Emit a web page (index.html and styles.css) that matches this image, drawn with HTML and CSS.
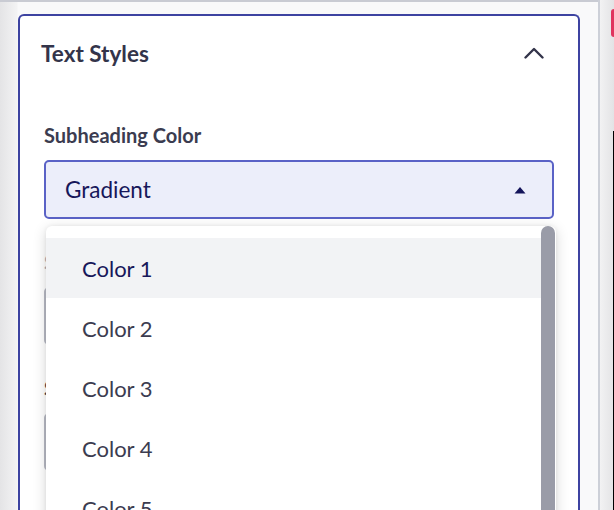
FILE: index.html
```html
<!DOCTYPE html>
<html>
<head>
<meta charset="utf-8">
<link rel="stylesheet" href="styles.css">
</head>
<body>
<div class="page">
  <div class="main">
    <div class="card">
      <div class="card-header">
        <span class="card-title">Text Styles</span>
        <svg class="chevron" width="20" height="12" viewBox="0 0 20 12"><polyline points="1.5,10.5 10,2 18.5,10.5" fill="none" stroke="#33344a" stroke-width="2.4" stroke-linecap="round" stroke-linejoin="round"/></svg>
      </div>
      <div class="card-body">
        <div class="field">
          <label class="field-label">Subheading Color</label>
          <div class="select-wrap">
            <div class="select">
              <span class="select-value">Gradient</span>
              <svg class="caret" width="12" height="8" viewBox="0 0 12 8"><polygon points="0.5,7.5 6,1 11.5,7.5" fill="#14145a"/></svg>
            </div>
            <div class="menu">
              <div class="menu-list">
                <div class="menu-item active">Color 1</div>
                <div class="menu-item">Color 2</div>
                <div class="menu-item">Color 3</div>
                <div class="menu-item">Color 4</div>
                <div class="menu-item">Color 5</div>
                <div class="menu-item">Color 6</div>
              </div>
              <div class="scrollbar"></div>
            </div>
          </div>
        </div>
        <div class="field">
          <label class="field-label muted">Subheading Size</label>
          <div class="input"></div>
        </div>
        <div class="field">
          <label class="field-label">Subheading Font</label>
          <div class="input"></div>
        </div>
      </div>
    </div>
  </div>
  <div class="divider"></div>
  <div class="side">
    <div class="side-badge"></div>
    <div class="side-edge"></div>
  </div>
</div>
</body>
</html>
```

FILE: styles.css
```css
* { box-sizing: border-box; }
html, body { margin: 0; padding: 0; }
body {
  width: 614px;
  height: 510px;
  overflow: hidden;
  font-family: "Lato", "Liberation Sans", sans-serif;
}
.page {
  display: flex;
  height: 510px;
  overflow: hidden;
}
.main {
  width: 598px;
  flex: none;
  border-top: 2px solid #c9cbd3;
  padding: 12px 18px 0 18px;
  background: linear-gradient(to right, #e4e4e6 0px, #f3f3f4 17px, #f9f9fa 18px, #f9f9fa 100%);
}
.card {
  width: 562px;
  height: 520px;
  border: 2px solid #3d43a1;
  border-bottom: none;
  border-radius: 6px 6px 0 0;
  background: #ffffff;
}
.card-header {
  display: flex;
  align-items: center;
  justify-content: space-between;
  padding: 0 34px 0 21px;
  height: 76px;
}
.card-title {
  font-size: 22.5px;
  font-weight: 700;
  color: #33344a;
  line-height: 28px;
}
.chevron { display: block; margin-top: -3px; }
.card-body {
  padding: 31px 24px 0 24px;
  display: flex;
  flex-direction: column;
  gap: 31px;
}
.field {
  display: flex;
  flex-direction: column;
  gap: 13px;
}
.field-label {
  font-size: 20px;
  font-weight: 700;
  color: #3b3c50;
  line-height: 24px;
}
.field-label.muted { color: #a9abb6; }
.select-wrap { position: relative; }
.select {
  height: 59px;
  width: 510px;
  border: 2px solid #5a62c6;
  border-radius: 5px;
  background: #eceefa;
  display: flex;
  align-items: center;
  justify-content: space-between;
  padding: 0 26px 0 19px;
}
.select-value {
  font-size: 22.5px;
  color: #17175a;
  line-height: 28px;
}
.caret { display: block; }
.input {
  height: 58px;
  width: 510px;
  border: 2px solid #b8bac4;
  border-radius: 5px;
  background: #fff;
}
.menu {
  position: absolute;
  top: 66px;
  left: 2px;
  width: 510px;
  height: 320px;
  background: #ffffff;
  border-radius: 6px 6px 0 0;
  box-shadow: 0 3px 14px rgba(0, 0, 0, 0.16), 0 0 4px rgba(0, 0, 0, 0.06);
  display: flex;
  overflow: hidden;
}
.menu-list {
  flex: 1;
  padding-top: 12px;
}
.menu-item {
  height: 60px;
  display: flex;
  align-items: center;
  padding-left: 36px;
  font-size: 22px;
  color: #3b3c50;
}
.menu-item.active {
  background: #f2f3f5;
  color: #17175a;
}
.scrollbar {
  width: 14px;
  flex: none;
  background: #9a9ca8;
  border-radius: 7px 7px 0 0;
  margin-right: 1px;
}
.divider {
  width: 2px;
  flex: none;
  background: #cdd0d8;
}
.side {
  flex: 1;
  position: relative;
  background: linear-gradient(to right, #f2f2f3, #e3e3e5);
}
.side-badge {
  position: absolute;
  right: 0;
  top: 9px;
  width: 3px;
  height: 28px;
  background: #e0345e;
  border-radius: 3px 0 0 3px;
}
.side-edge {
  position: absolute;
  right: 0;
  top: 131px;
  width: 1px;
  bottom: 0;
  background: #000;
}
```
